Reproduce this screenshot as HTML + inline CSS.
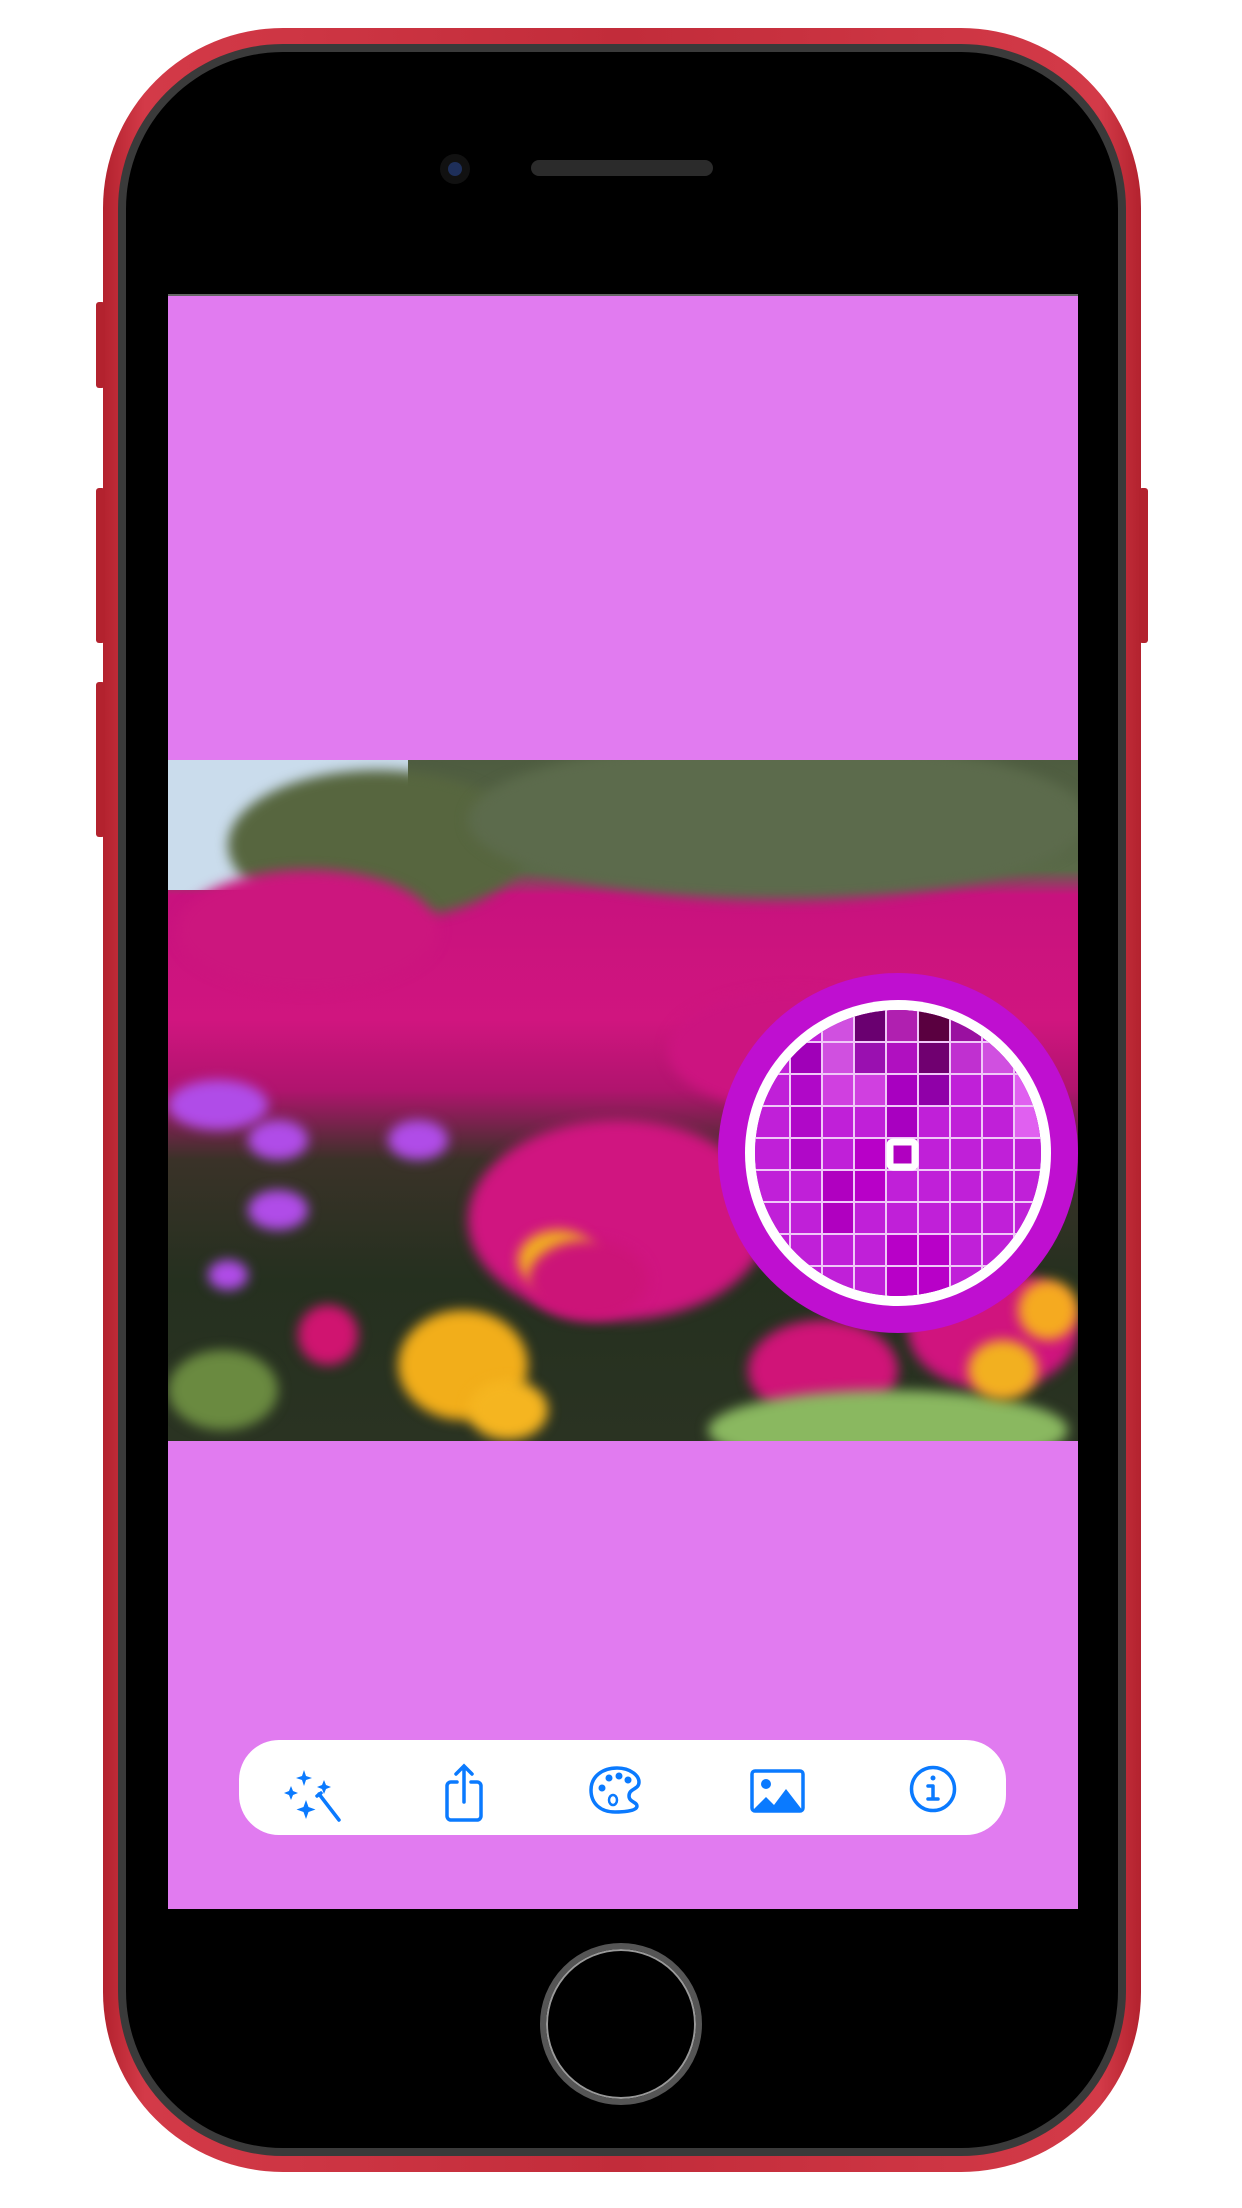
<!DOCTYPE html>
<html><head><meta charset="utf-8"><style>
html,body{margin:0;padding:0;background:#fff;width:1242px;height:2208px;overflow:hidden;font-family:"Liberation Sans",sans-serif}
.abs{position:absolute}
#phone{left:103px;top:28px;width:1038px;height:2144px;border-radius:180px;background:linear-gradient(90deg,#b3222e,#d33a48 4%,#c22c3a 50%,#d33a48 96%,#b3222e);}
#bezel{left:118px;top:44px;width:1008px;height:2112px;border-radius:165px;background:#3a3a3a;}
#inner{left:126px;top:52px;width:992px;height:2096px;border-radius:157px;background:#000;}
#screen{left:168px;top:294px;width:910px;height:1613px;background:#e17bf0;border-top:2px solid #666}
#photo{left:168px;top:760px;width:910px;height:681px;overflow:hidden;background:linear-gradient(180deg,#4e5c40 0,#5a6a48 110px,#c8127e 135px,#d0157f 260px,#b0146e 330px,#3a3228 400px,#25301f 520px,#2a3322 681px);}
.b{position:absolute;border-radius:50%;filter:blur(6px)}
#mag{left:718px;top:973px;width:360px;height:360px;border-radius:50%;background:#bf0fd0;}
#ring{left:745px;top:1000px;width:306px;height:306px;border-radius:50%;background:#fff}
#grid{left:755px;top:1010px;width:286px;height:286px;border-radius:50%;overflow:hidden;background:#c020d8}
#tb{left:239px;top:1740px;width:767px;height:95px;border-radius:40px;background:#fff}
</style></head><body>
<div id="phone" class="abs"></div>
<div class="abs" style="left:96px;top:302px;width:9px;height:86px;background:#b3222e;border-radius:3px"></div>
<div class="abs" style="left:96px;top:488px;width:9px;height:155px;background:#b3222e;border-radius:3px"></div>
<div class="abs" style="left:96px;top:682px;width:9px;height:155px;background:#b3222e;border-radius:3px"></div>
<div class="abs" style="left:1139px;top:488px;width:9px;height:155px;background:#b3222e;border-radius:3px"></div>
<div id="bezel" class="abs"></div>
<div id="inner" class="abs"></div>
<div class="abs" style="left:440px;top:154px;width:30px;height:30px;border-radius:50%;background:#111"></div>
<div class="abs" style="left:448px;top:162px;width:14px;height:14px;border-radius:50%;background:#1e2f5a"></div>
<div class="abs" style="left:531px;top:160px;width:182px;height:16px;border-radius:8px;background:#2b2b2b"></div>
<div id="screen" class="abs"></div>
<div id="photo" class="abs">
<div class="abs" style="left:0;top:0;width:240px;height:130px;background:#cadcec"></div>
<div class="b" style="left:60px;top:10px;width:300px;height:150px;background:#57663f"></div>
<div class="b" style="left:300px;top:-20px;width:620px;height:160px;background:#5c6b4c"></div>
<div class="b" style="left:10px;top:110px;width:260px;height:120px;background:#cc167e"></div>
<div class="b" style="left:0px;top:320px;width:100px;height:50px;background:#b04ce8"></div>
<div class="b" style="left:80px;top:360px;width:60px;height:40px;background:#b04ce8"></div>
<div class="b" style="left:220px;top:360px;width:60px;height:40px;background:#b04ce8"></div>
<div class="b" style="left:300px;top:360px;width:300px;height:200px;background:#d01580"></div>
<div class="b" style="left:500px;top:230px;width:250px;height:120px;background:#cc1480"></div>
<div class="b" style="left:80px;top:430px;width:60px;height:40px;background:#b04ce8"></div>
<div class="b" style="left:40px;top:500px;width:40px;height:30px;background:#b04ce8"></div>
<div class="b" style="left:130px;top:545px;width:60px;height:60px;background:#d01470"></div>
<div class="b" style="left:230px;top:550px;width:130px;height:110px;background:#f2ae1a"></div>
<div class="b" style="left:300px;top:620px;width:80px;height:60px;background:#f5b520"></div>
<div class="b" style="left:350px;top:470px;width:80px;height:60px;background:#f2b020"></div>
<div class="b" style="left:360px;top:480px;width:120px;height:80px;background:#cc1478"></div>
<div class="b" style="left:0px;top:590px;width:110px;height:80px;background:#6a8a40"></div>
<div class="b" style="left:580px;top:560px;width:150px;height:100px;background:#d01478"></div>
<div class="b" style="left:740px;top:510px;width:170px;height:120px;background:#d0147e"></div>
<div class="b" style="left:850px;top:520px;width:60px;height:60px;background:#f5aa20"></div>
<div class="b" style="left:540px;top:630px;width:360px;height:80px;background:#8ab860"></div>
<div class="b" style="left:800px;top:580px;width:70px;height:60px;background:#f2b020"></div>
</div>
<div id="mag" class="abs"></div>
<div id="ring" class="abs"></div>
<div id="grid" class="abs">
<svg width="286" height="286" viewBox="0 0 286 286">
<g transform="translate(-8,-8)">
<rect x="0" y="0" width="320" height="320" fill="#c020d8"/>
<rect x="107" y="0" width="32" height="40" fill="#6a0070"/>
<rect x="139" y="0" width="32" height="40" fill="#b020b0"/>
<rect x="171" y="0" width="32" height="40" fill="#5a0040"/>
<rect x="203" y="0" width="32" height="40" fill="#9a10a0"/>
<rect x="75" y="8" width="32" height="32" fill="#d050e0"/>
<rect x="43" y="40" width="32" height="32" fill="#a000b8"/>
<rect x="75" y="40" width="32" height="32" fill="#d050e0"/>
<rect x="107" y="40" width="32" height="32" fill="#9a10b0"/>
<rect x="139" y="40" width="32" height="32" fill="#b010c0"/>
<rect x="171" y="40" width="32" height="32" fill="#700070"/>
<rect x="203" y="40" width="32" height="32" fill="#c030d0"/>
<rect x="235" y="40" width="32" height="32" fill="#d050e0"/>
<rect x="139" y="72" width="32" height="64" fill="#a800c0"/>
<rect x="171" y="72" width="32" height="32" fill="#9000a8"/>
<rect x="75" y="72" width="64" height="32" fill="#d040e0"/>
<rect x="267" y="72" width="40" height="64" fill="#e060f0"/>
<rect x="43" y="72" width="32" height="96" fill="#b008c8"/>
<rect x="107" y="136" width="32" height="64" fill="#b800c8"/>
<rect x="75" y="168" width="32" height="64" fill="#b000c0"/>
<rect x="139" y="232" width="64" height="64" fill="#b800c8"/>
<g stroke="#f0c8f8" stroke-width="2">
<line x1="43" y1="0" x2="43" y2="320"/><line x1="75" y1="0" x2="75" y2="320"/><line x1="107" y1="0" x2="107" y2="320"/><line x1="139" y1="0" x2="139" y2="320"/><line x1="171" y1="0" x2="171" y2="320"/><line x1="203" y1="0" x2="203" y2="320"/><line x1="235" y1="0" x2="235" y2="320"/><line x1="267" y1="0" x2="267" y2="320"/>
<line y1="40" x1="0" y2="40" x2="320"/><line y1="72" x1="0" y2="72" x2="320"/><line y1="104" x1="0" y2="104" x2="320"/><line y1="136" x1="0" y2="136" x2="320"/><line y1="168" x1="0" y2="168" x2="320"/><line y1="200" x1="0" y2="200" x2="320"/><line y1="232" x1="0" y2="232" x2="320"/><line y1="264" x1="0" y2="264" x2="320"/>
</g>
<rect x="143" y="140" width="25" height="25" fill="#b000c0" stroke="#fff" stroke-width="7" rx="3"/>
</g></svg></div>
<div id="tb" class="abs"></div>
<svg class="abs" style="left:239px;top:1740px" width="767" height="95" viewBox="0 0 767 95" fill="none" stroke="#0a7aff" stroke-width="3.5" stroke-linecap="round">
<g fill="#0a7aff" stroke="none">
<path d="M65 30 l2 6 6 2 -6 2 -2 6 -2 -6 -6 -2 6 -2z"/>
<path d="M85 40 l2 5 5 2 -5 2 -2 5 -2 -5 -5 -2 5 -2z"/>
<path d="M52 46 l2 5 5 2 -5 2 -2 5 -2 -5 -5 -2 5 -2z"/>
<path d="M67 60 l2.5 7 7 2.5 -7 2.5 -2.5 7 -2.5 -7 -7 -2.5 7 -2.5z"/>
</g>
<path d="M80 54 l20 26 M78 56 l4 -3"/>
<path d="M218 42 h-6 a4 4 0 0 0 -4 4 v30 a4 4 0 0 0 4 4 h26 a4 4 0 0 0 4 -4 v-30 a4 4 0 0 0 -4 -4 h-6 M225 62 v-36 M217 34 l8 -8 8 8"/>
<path d="M376 72 c-14 0 -24 -8 -24 -22 c0 -14 12 -22 26 -22 c14 0 22 8 22 14 c0 8 -10 6 -10 14 c0 6 8 6 8 10 c0 4 -8 6 -22 6z"/>
<g fill="#0a7aff" stroke="none"><circle cx="363" cy="48" r="3.5"/><circle cx="370" cy="38" r="3.5"/><circle cx="380" cy="36" r="3.5"/><circle cx="389" cy="40" r="3.5"/></g>
<ellipse cx="374" cy="60" rx="4" ry="5" stroke-width="2.5"/>
<rect x="513" y="31" width="51" height="40" rx="3"/>
<path fill="#0a7aff" stroke="none" d="M513 71 l14 -14 8 8 12 -16 17 22z"/>
<circle cx="527" cy="44" r="5" fill="#0a7aff" stroke="none"/>
<circle cx="694" cy="49" r="21.5"/>
<path d="M694 46 v13 M689 46 h5 M689 59 h10"/>
<circle cx="694" cy="38" r="2.5" fill="#0a7aff" stroke="none"/>
</svg>
<div class="abs" style="left:540px;top:1943px;width:150px;height:150px;border-radius:50%;border:6px solid #555;box-shadow:inset 0 0 0 2px #999"></div>
</body></html>
